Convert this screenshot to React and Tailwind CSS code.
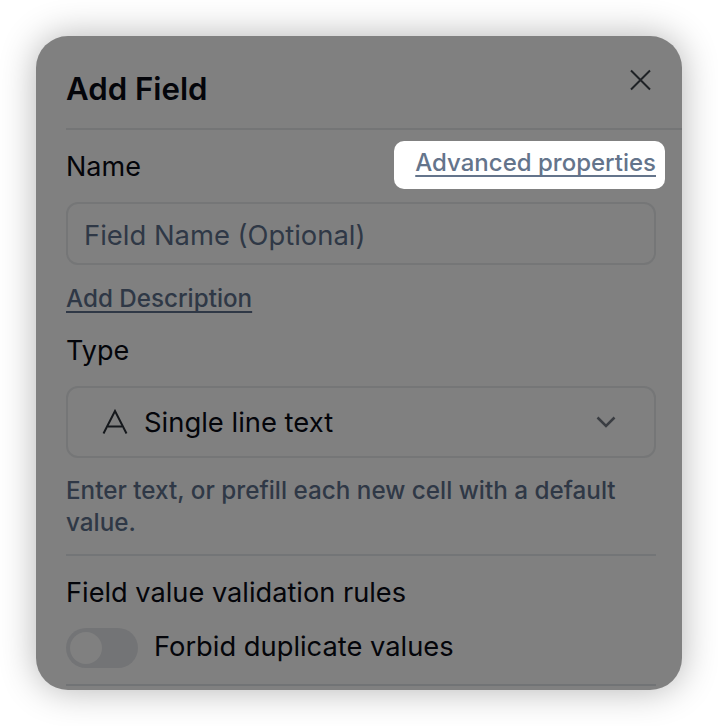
import React from "react";

const font = { fontFamily: "Inter, 'Liberation Sans', sans-serif" };

export default function App() {
  return (
    <div className="h-[726px] w-[718px] bg-white p-[36px]" style={font}>
      <div className="h-[654px] w-[646px] overflow-hidden rounded-[32px] bg-[#808080] pl-[30px] shadow-[0_0_36px_rgba(0,0,0,0.3)]">
        <div className="flex h-[94px] items-start justify-between border-b-2 border-[#747576] pr-[30px]">
          <h1 className="mt-[35px] text-[31.2px] leading-[36px] font-semibold text-[#04050a]">Add Field</h1>
          <svg className="mt-[32px]" width="24" height="24" viewBox="0 0 24 24" fill="none" stroke="#1f2226" strokeWidth="2">
            <path d="M3 2.500L22 21.500M22 2.500L3 21.500" />
          </svg>
        </div>
        <div className="w-[590px]">
          <div className="mt-[11px] flex h-[48px] items-center justify-between">
            <span className="mt-[3px] text-[27px] leading-[32px] text-[#04050a]">Name</span>
            <a className="-mr-[9px] flex h-[48px] items-center rounded-[10px] bg-white pr-[9px] pb-[5px] pl-[21px] text-[24px] leading-[30px] font-medium text-[#64748b] underline decoration-2 underline-offset-[4px] [text-decoration-skip-ink:none]">
              Advanced properties
            </a>
          </div>
          <div className="mt-[13px] flex h-[63px] items-center rounded-[12px] border-2 border-[#757677] px-[16px] pt-[4px] text-[27.4px] text-[#2f3846]">
            Field Name (Optional)
          </div>
          <div className="mt-[18px] text-[24.200px] leading-[32px] font-medium text-[#2f3846] underline decoration-2 underline-offset-[4px] [text-decoration-skip-ink:none]">
            Add Description
          </div>
          <div className="mt-[20px] text-[27px] leading-[32px] text-[#04050a]">Type</div>
          <div className="mt-[19px] flex h-[72px] items-center justify-between rounded-[12px] border-2 border-[#757677] pr-[38px] pl-[34px]">
            <div className="flex items-center gap-[16px]">
              <svg width="26" height="26" viewBox="0 0 26 26" fill="none" stroke="#15181c" strokeWidth="2">
                <path d="M1.500 24.500L13 2L24.500 24.500" />
                <path d="M6 17.500H20" />
              </svg>
              <span className="text-[27.4px] leading-[32px] text-[#04050a]">Single line text</span>
            </div>
            <svg width="20" height="12" viewBox="0 0 20 12" fill="none" stroke="#3a3d42" strokeWidth="2.500">
              <path d="M1.500 1.500L10 10L18.500 1.500" />
            </svg>
          </div>
          <p className="mt-[17px] text-[24.250px] leading-[32px] font-medium text-[#2f3846]">
            Enter text, or prefill each new cell with a default value.
          </p>
          <div className="mt-[15px] h-[2px] bg-[#737577]" />
          <div className="mt-[21px] text-[27.2px] leading-[32px] text-[#04050a]">Field value validation rules</div>
          <div className="mt-[19px] flex items-center gap-[16px]">
            <div className="flex h-[40px] w-[72px] items-center rounded-full bg-[#737476] pl-[4px]">
              <div className="h-[32px] w-[32px] rounded-full bg-[#808080]" />
            </div>
            <span className="mb-[2px] text-[27.3px] leading-[32px] text-[#04050a]">Forbid duplicate values</span>
          </div>
          <div className="mt-[16px] h-[2px] bg-[#717375]" />
        </div>
      </div>
    </div>
  );
}
